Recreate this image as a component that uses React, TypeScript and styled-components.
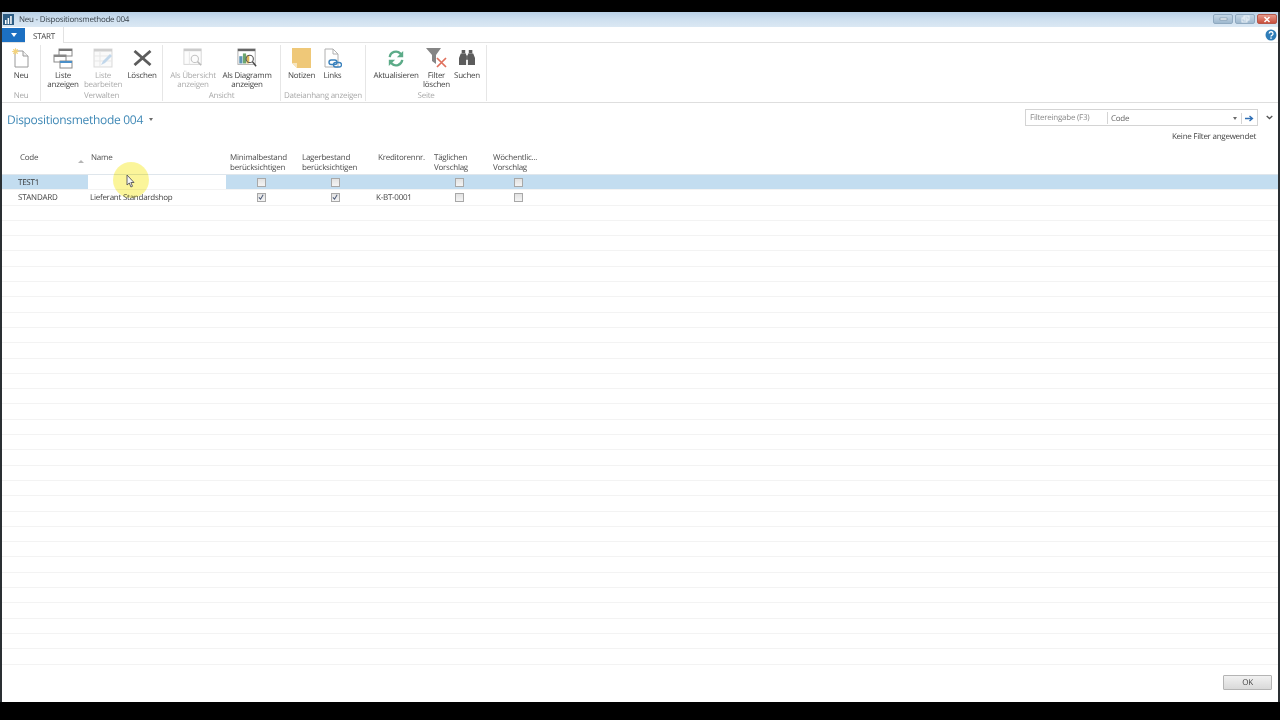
import React from "react";
import styled, { createGlobalStyle } from "styled-components";

const Global = createGlobalStyle`
  html, body { margin: 0; padding: 0; background: #000; }
  body { font-family: "Open Sans", "Noto Sans", sans-serif; font-size: 8px; letter-spacing: -0.25px; text-rendering: geometricPrecision; color: #4a4a4a; }
`;

const Screen = styled.div`
  width: 1280px; height: 720px; box-sizing: border-box; padding: 12px 0 18px; background: #000; overflow: hidden; position: relative;
`;
const Window = styled.div`
  height: 100%; display: flex; flex-direction: column; background: #fff; border-left: 2px solid #2a2f33; border-right: 2px solid #2a2f33; box-sizing: border-box; filter: blur(0.35px);
`;
const TitleBar = styled.div`
  height: 15px; flex: none; display: flex; align-items: center; gap: 5px; padding-left: 1px; background: linear-gradient(#b9d0e6, #d0e1f0 55%, #dbe8f3); color: #39424a;
`;
const TitleText = styled.span`flex: 1; margin-top: -1px;`;
const WinButtons = styled.div`display: flex; gap: 2px; padding-right: 1px; align-self: flex-start; margin-top: 2px;`;
const WinButton = styled.div<{ $close?: boolean }>`
  width: 20px; height: 10px; border-radius: 2px; display: flex; align-items: center; justify-content: center;
  border: 1px solid ${p => (p.$close ? "#b5574a" : "#8fa9c0")}; box-sizing: border-box;
  background: ${p => (p.$close ? "linear-gradient(#e59a8c, #c94f3d)" : "linear-gradient(#c4d6e6, #9fb9cf)")};
`;
const TabRow = styled.div`
  height: 16px; flex: none; display: flex; align-items: stretch; background: #fff; border-bottom: 1px solid #e2e2e2; box-sizing: border-box;
`;
const MenuButton = styled.div`
  width: 23px; height: 14px; margin-top: 1px; background: #1c70c2; display: flex; align-items: center; justify-content: center;
`;
const Tab = styled.div`
  width: 39px; height: 16px; padding-top: 2px; box-sizing: border-box; display: flex; align-items: center; justify-content: center; background: #fff;
  border-right: 1px solid #e2e2e2; color: #444;
`;
const Help = styled.div`margin-left: auto; padding: 2px 1px 0 0;`;
const Ribbon = styled.div`
  height: 60px; flex: none; display: flex; border-bottom: 1px solid #dedede; background: #fff; box-sizing: border-box;
`;
const Group = styled.div<{ $w: number }>`
  width: ${p => p.$w}px; flex: none; display: flex; flex-direction: column; align-items: center; border-right: 1px solid #e6e6e6; margin: 2px 0 1px; box-sizing: border-box;
`;
const GroupButtons = styled.div`flex: 1; display: flex; align-items: flex-start; justify-content: flex-start; width: 100%;`;
const GroupLabel = styled.div`color: #a9a9a9; line-height: 10px; height: 10px;`;
const RibbonBtn = styled.div<{ $w: number; $off?: boolean }>`
  width: ${p => p.$w}px; flex: none; display: flex; flex-direction: column; align-items: center; text-align: center; line-height: 8.8px;
  color: ${p => (p.$off ? "#ababab" : "#444")}; white-space: nowrap;
`;
const IconBox = styled.div`height: 20px; margin: 3px 0 4px; display: flex; align-items: center; justify-content: center;`;
const Content = styled.div`flex: 1; display: flex; flex-direction: column; min-height: 0; position: relative;`;
const PageHead = styled.div`
  display: flex; flex: none; justify-content: space-between; padding: 6px 0 0 5px; height: 47px; box-sizing: border-box;
`;
const PageTitle = styled.div`
  font-size: 12px; letter-spacing: -0.3px; line-height: 17px; color: #4089b6; display: flex; align-items: center; gap: 6px; height: 20px;
`;
const Caret = styled.span`width: 0; height: 0; border-left: 2.5px solid transparent; border-right: 2.5px solid transparent; border-top: 3px solid #6b6b6b;`;
const FilterColumn = styled.div`display: flex; flex-direction: column; align-items: flex-end;`;
const FilterRow = styled.div`display: flex; align-items: center; gap: 8px; margin-right: 5px;`;
const FilterBox = styled.div`
  width: 233px; height: 17px; padding-top: 1px; box-sizing: border-box; border: 1px solid #d4d4d4; display: flex; align-items: center; color: #666; background: #fff;
`;
const FilterLabel = styled.span`width: 77px; padding-left: 4px; border-right: 1px solid #d4d4d4; color: #8a8a8a; line-height: 12px; margin-right: 3px;`;
const FilterValue = styled.span`flex: 1;`;
const FilterArrow = styled.div`width: 15px; height: 11px; display: flex; align-items: center; justify-content: center; border-left: 1px solid #d4d4d4;`;
const FilterCaret = styled.div`width: 8px; margin-right: 2px; display: flex; align-items: center; justify-content: center;`;
const FilterStatus = styled.div`color: #444; margin: 5px 22px 0 0; line-height: 12px;`;
const Table = styled.div`flex: 1; min-height: 0; overflow: hidden; display: flex; flex-direction: column;`;
const Columns = "86px 138px 70px 78px 56px 58px 60px 1fr";
const HeadRow = styled.div`
  display: grid; flex: none; grid-template-columns: ${Columns}; height: 25px; box-sizing: border-box; line-height: 10px; border-bottom: 1px solid #dfe6ec; color: #4d4d4d;
`;
const HeadCell = styled.div<{ $pl: number }>`padding: 3px 0 0 ${p => p.$pl}px; white-space: nowrap; position: relative;`;
const SortMark = styled.span`
  position: absolute; right: 4px; top: 10px; width: 0; height: 0; border-left: 3px solid transparent; border-right: 3px solid transparent; border-bottom: 3px solid #b5b5b5;
`;
const Row = styled.div<{ $selected?: boolean }>`
  display: grid; grid-template-columns: ${Columns}; height: 15.3px; flex: none; box-sizing: border-box; align-items: center;
  background: ${p => (p.$selected ? "#c3ddf0" : "#fff")}; border-bottom: 1px solid #f3f3f3; color: #444;
`;
const Cell = styled.div<{ $pl?: number; $center?: boolean; $edit?: boolean; $strong?: boolean }>`
  height: 100%; display: flex; align-items: center; padding-left: ${p => p.$pl ?? 0}px; white-space: nowrap;
  justify-content: ${p => (p.$center ? "center" : "flex-start")};
  background: ${p => (p.$edit ? "#fff" : "transparent")}; color: ${p => (p.$strong ? "#333" : "inherit")};
`;
const Check = styled.div`
  width: 7px; height: 7px; border: 1px solid #a8a8a8; background: linear-gradient(#e2e2e2, #f4f4f4); display: flex; align-items: center; justify-content: center;
`;
const Footer = styled.div`height: 32px; flex: none; display: flex; justify-content: flex-end; align-items: flex-start; padding: 5px 6px 0 0; box-sizing: border-box; background: #fff;`;
const OkButton = styled.div`
  width: 49px; height: 15px; box-sizing: border-box; border: 1px solid #b4b4b4; border-radius: 1px; background: linear-gradient(#f1f1f1, #d9d9d9); display: flex; align-items: center; justify-content: center; color: #444;
`;
const Highlight = styled.div`
  position: absolute; left: 113px; top: 162px; width: 36px; height: 36px; border-radius: 50%; background: radial-gradient(#fbf59a 65%, #fcf8b8); mix-blend-mode: multiply; pointer-events: none;
`;
const Cursor = styled.svg`position: absolute; left: 126px; top: 174px;`;

const NewIcon = () => (
  <svg width="18" height="20" viewBox="0 0 18 20">
    <path d="M3 3h8l5 5v11H3z" fill="#fff" stroke="#9a9a9a" />
    <path d="M11 3v5h5" fill="#f1f1f1" stroke="#9a9a9a" />
    <circle cx="3.5" cy="3.5" r="2.2" fill="#f2d27c" />
    <path d="M3.5 0v7M0 3.5h7M1 1l5 5M6 1L1 6" stroke="#f2d27c" strokeWidth=".8" />
  </svg>
);
const ListShowIcon = () => (
  <svg width="20" height="21" viewBox="0 0 20 21">
    <rect x="6" y="1" width="13" height="7" fill="#fff" stroke="#888" /><rect x="6" y="1" width="13" height="2" fill="#777" />
    <rect x="1" y="7" width="12" height="7" fill="#fff" stroke="#888" /><rect x="1" y="7" width="12" height="2" fill="#888" />
    <rect x="7" y="13" width="12" height="7" fill="#fff" stroke="#888" /><rect x="7" y="13" width="12" height="2" fill="#4a8fc8" />
  </svg>
);
const ListEditIcon = () => (
  <svg width="20" height="20" viewBox="0 0 20 20" opacity=".55">
    <rect x="1" y="1" width="18" height="18" fill="#f6f6f6" stroke="#bbb" /><rect x="1" y="1" width="18" height="2.5" fill="#aaa" />
    <path d="M1 8h18M1 13h18M7 3v16" stroke="#d5d5d5" /><path d="M8 17l2-4 7-7 2 2-7 7z" fill="#8fb7dc" />
  </svg>
);
const DeleteIcon = () => (
  <svg width="19" height="16" viewBox="0 0 19 16"><path d="M1.5 1l16 14M17.5 1l-16 14" stroke="#5c5c5c" strokeWidth="2.8" /></svg>
);
const OverviewIcon = () => (
  <svg width="20" height="20" viewBox="0 0 22 22" opacity=".5">
    <rect x="1" y="1" width="19" height="17" fill="#fafafa" stroke="#aaa" /><rect x="1" y="1" width="19" height="2.5" fill="#999" />
    <path d="M7 4v14" stroke="#ccc" /><circle cx="13" cy="12" r="4" fill="none" stroke="#888" strokeWidth="1.2" /><path d="M16 15l4 4" stroke="#777" strokeWidth="1.6" />
  </svg>
);
const ChartIcon = () => (
  <svg width="20" height="20" viewBox="0 0 22 22">
    <rect x="1" y="1" width="19" height="17" fill="#fff" stroke="#aaa" /><rect x="1" y="1" width="19" height="2.5" fill="#666" />
    <rect x="2.5" y="9" width="3.5" height="8" fill="#5f95b5" /><rect x="6.5" y="6" width="3.5" height="11" fill="#6ea66e" /><rect x="10.5" y="8" width="3" height="9" fill="#e0b65a" />
    <circle cx="14" cy="12" r="4" fill="none" stroke="#555" strokeWidth="1.2" /><path d="M17 15l4 5" stroke="#444" strokeWidth="1.6" />
  </svg>
);
const NoteIcon = () => (
  <svg width="19" height="20" viewBox="0 0 19 20"><path d="M0 0h19v20H5l-5-5z" fill="#efc878" /><path d="M0 15h5v5z" fill="#f7e6c0" /></svg>
);
const LinkIcon = () => (
  <svg width="18" height="20" viewBox="0 0 18 20">
    <path d="M1 1h8l5 5v13H1z" fill="#fff" stroke="#b0b0b0" /><path d="M9 1v5h5" fill="none" stroke="#b0b0b0" />
    <rect x="5" y="12" width="8" height="4.5" rx="2.2" fill="none" stroke="#3b82bd" strokeWidth="1.4" /><rect x="9.5" y="14.5" width="8" height="4.5" rx="2.2" fill="none" stroke="#3b82bd" strokeWidth="1.4" />
  </svg>
);
const RefreshIcon = () => (
  <svg width="18" height="17" viewBox="0 0 20 19" fill="none">
    <path d="M3 8a7 7 0 0 1 12-4l2 2" stroke="#5cab88" strokeWidth="2.6" /><path d="M18 1v7h-7z" fill="#5cab88" />
    <path d="M17 11a7 7 0 0 1-12 4l-2-2" stroke="#5cab88" strokeWidth="2.6" /><path d="M2 18v-7h7z" fill="#5cab88" />
  </svg>
);
const FilterClearIcon = () => (
  <svg width="21" height="20" viewBox="0 0 21 20">
    <path d="M0 0h15l-5 7v9l-4-3V7z" fill="#858585" /><path d="M11 10l9 9M20 10l-9 9" stroke="#e0705c" strokeWidth="1.7" />
  </svg>
);
const BinocularIcon = () => (
  <svg width="18" height="16" viewBox="0 0 20 18" fill="#5c5c5c">
    <path d="M4 0h4v4H4zM12 0h4v4h-4z" /><path d="M3 4h6v13H1V9zM11 4h6l2 5v8h-8z" /><rect x="9" y="6" width="2" height="5" />
  </svg>
);
const CheckMark = () => (
  <svg width="6" height="6" viewBox="0 0 7 7"><path d="M1 4l2 2 3-5" fill="none" stroke="#4c5a78" strokeWidth="1.2" /></svg>
);

type Btn = { w: number; icon: React.ReactNode; label: React.ReactNode; off?: boolean };
const groups: { w: number; label: string; buttons: Btn[] }[] = [
  { w: 39, label: "Neu", buttons: [{ w: 38, icon: <NewIcon />, label: "Neu" }] },
  { w: 122, label: "Verwalten", buttons: [
    { w: 44, icon: <ListShowIcon />, label: <>Liste<br />anzeigen</> },
    { w: 36, icon: <ListEditIcon />, label: <>Liste<br />bearbeiten</>, off: true },
    { w: 42, icon: <DeleteIcon />, label: "Löschen" },
  ] },
  { w: 118, label: "Ansicht", buttons: [
    { w: 60, icon: <OverviewIcon />, label: <>Als Übersicht<br />anzeigen</>, off: true },
    { w: 48, icon: <ChartIcon />, label: <>Als Diagramm<br />anzeigen</> },
  ] },
  { w: 85, label: "Dateianhang anzeigen", buttons: [
    { w: 41, icon: <NoteIcon />, label: "Notizen" },
    { w: 21, icon: <LinkIcon />, label: "Links" },
  ] },
  { w: 121, label: "Seite", buttons: [
    { w: 60, icon: <RefreshIcon />, label: "Aktualisieren" },
    { w: 21, icon: <FilterClearIcon />, label: <>Filter<br />löschen</> },
    { w: 40, icon: <BinocularIcon />, label: "Suchen" },
  ] },
];

const heads: { pl: number; text: React.ReactNode; sort?: boolean }[] = [
  { pl: 18, text: "Code", sort: true },
  { pl: 3, text: "Name" },
  { pl: 4, text: <>Minimalbestand<br />berücksichtigen</> },
  { pl: 6, text: <>Lagerbestand<br />berücksichtigen</> },
  { pl: 4, text: "Kreditorennr." },
  { pl: 4, text: <>Täglichen<br />Vorschlag</> },
  { pl: 5, text: <>Wöchentlic...<br />Vorschlag</> },
];

const blankRows = Array.from({ length: 31 }, (_, i) => i);

const Box = ({ on }: { on?: boolean }) => <Check>{on && <CheckMark />}</Check>;

export default function App() {
  return (
    <Screen>
      <Global />
      <Window>
        <TitleBar>
          <svg width="11" height="11" viewBox="0 0 11 11">
            <rect width="11" height="11" fill="#2f5f86" />
            <path d="M2 10V6h1.5v4zM4.6 10V4h1.5v6zM7.2 10V2h1.5v8z" fill="#fff" />
          </svg>
          <TitleText>Neu - Dispositionsmethode 004</TitleText>
          <WinButtons>
            <WinButton><svg width="9" height="4" viewBox="0 0 9 4"><rect x="1" y="1" width="7" height="2" fill="#f4f8fb" stroke="#667c90" strokeWidth=".5" /></svg></WinButton>
            <WinButton><svg width="9" height="8" viewBox="0 0 9 8" fill="none" stroke="#eef4f9"><rect x="3" y="1" width="5" height="4" /><rect x="1" y="3" width="5" height="4" /></svg></WinButton>
            <WinButton $close><svg width="8" height="7" viewBox="0 0 8 7"><path d="M1.5 1l5 5M6.5 1l-5 5" stroke="#fff" strokeWidth="1.5" /></svg></WinButton>
          </WinButtons>
        </TitleBar>
        <TabRow>
          <MenuButton><svg width="6" height="4" viewBox="0 0 6 4"><path d="M0 0h6L3 4z" fill="#fff" /></svg></MenuButton>
          <Tab>START</Tab>
          <Help>
            <svg width="12" height="12" viewBox="0 0 12 12">
              <circle cx="6" cy="6" r="5.5" fill="#2f7db8" />
              <path d="M4.2 4.6a1.9 1.9 0 1 1 2.6 1.8c-.6.3-.8.6-.8 1.2" fill="none" stroke="#fff" strokeWidth="1.3" />
              <rect x="5.3" y="8.4" width="1.4" height="1.4" fill="#fff" />
            </svg>
          </Help>
        </TabRow>
        <Ribbon>
          {groups.map(g => (
            <Group key={g.label} $w={g.w}>
              <GroupButtons>
                {g.buttons.map((b, i) => (
                  <RibbonBtn key={i} $w={b.w} $off={b.off}>
                    <IconBox>{b.icon}</IconBox>
                    <span>{b.label}</span>
                  </RibbonBtn>
                ))}
              </GroupButtons>
              <GroupLabel>{g.label}</GroupLabel>
            </Group>
          ))}
        </Ribbon>
        <Content>
          <PageHead>
            <PageTitle>Dispositionsmethode 004 <Caret /></PageTitle>
            <FilterColumn>
              <FilterRow>
                <FilterBox>
                  <FilterLabel>Filtereingabe (F3)</FilterLabel>
                  <FilterValue>Code</FilterValue>
                  <FilterCaret><Caret /></FilterCaret>
                  <FilterArrow>
                    <svg width="9" height="7" viewBox="0 0 9 7"><path d="M0 3.5h7M4.5 1L7.5 3.5 4.5 6" fill="none" stroke="#2f6fb5" strokeWidth="1.3" /></svg>
                  </FilterArrow>
                </FilterBox>
                <svg width="7" height="5" viewBox="0 0 7 5"><path d="M.7 1l2.8 2.6L6.3 1" fill="none" stroke="#555" strokeWidth="1.3" /></svg>
              </FilterRow>
              <FilterStatus>Keine Filter angewendet</FilterStatus>
            </FilterColumn>
          </PageHead>
          <Table>
            <HeadRow>
              {heads.map((h, i) => (
                <HeadCell key={i} $pl={h.pl}>{h.text}{h.sort && <SortMark />}</HeadCell>
              ))}
            </HeadRow>
            <Row $selected>
              <Cell $pl={16} $strong>TEST1</Cell>
              <Cell $edit />
              <Cell $center><Box /></Cell>
              <Cell $center><Box /></Cell>
              <Cell />
              <Cell $center><Box /></Cell>
              <Cell $center><Box /></Cell>
              <Cell />
            </Row>
            <Row>
              <Cell $pl={16}>STANDARD</Cell>
              <Cell $pl={2}>Lieferant Standardshop</Cell>
              <Cell $center><Box on /></Cell>
              <Cell $center><Box on /></Cell>
              <Cell $pl={2}>K-BT-0001</Cell>
              <Cell $center><Box /></Cell>
              <Cell $center><Box /></Cell>
              <Cell />
            </Row>
            {blankRows.map(i => <Row key={i} />)}
          </Table>
          <Footer><OkButton>OK</OkButton></Footer>
        </Content>
      </Window>
      <Highlight />
      <Cursor width="9" height="14" viewBox="0 0 9 14">
        <path d="M1 1v10l2.3-2 1.6 4 1.6-.7-1.6-3.8H8z" fill="#f4f6f8" stroke="#555" strokeWidth=".9" />
      </Cursor>
    </Screen>
  );
}
